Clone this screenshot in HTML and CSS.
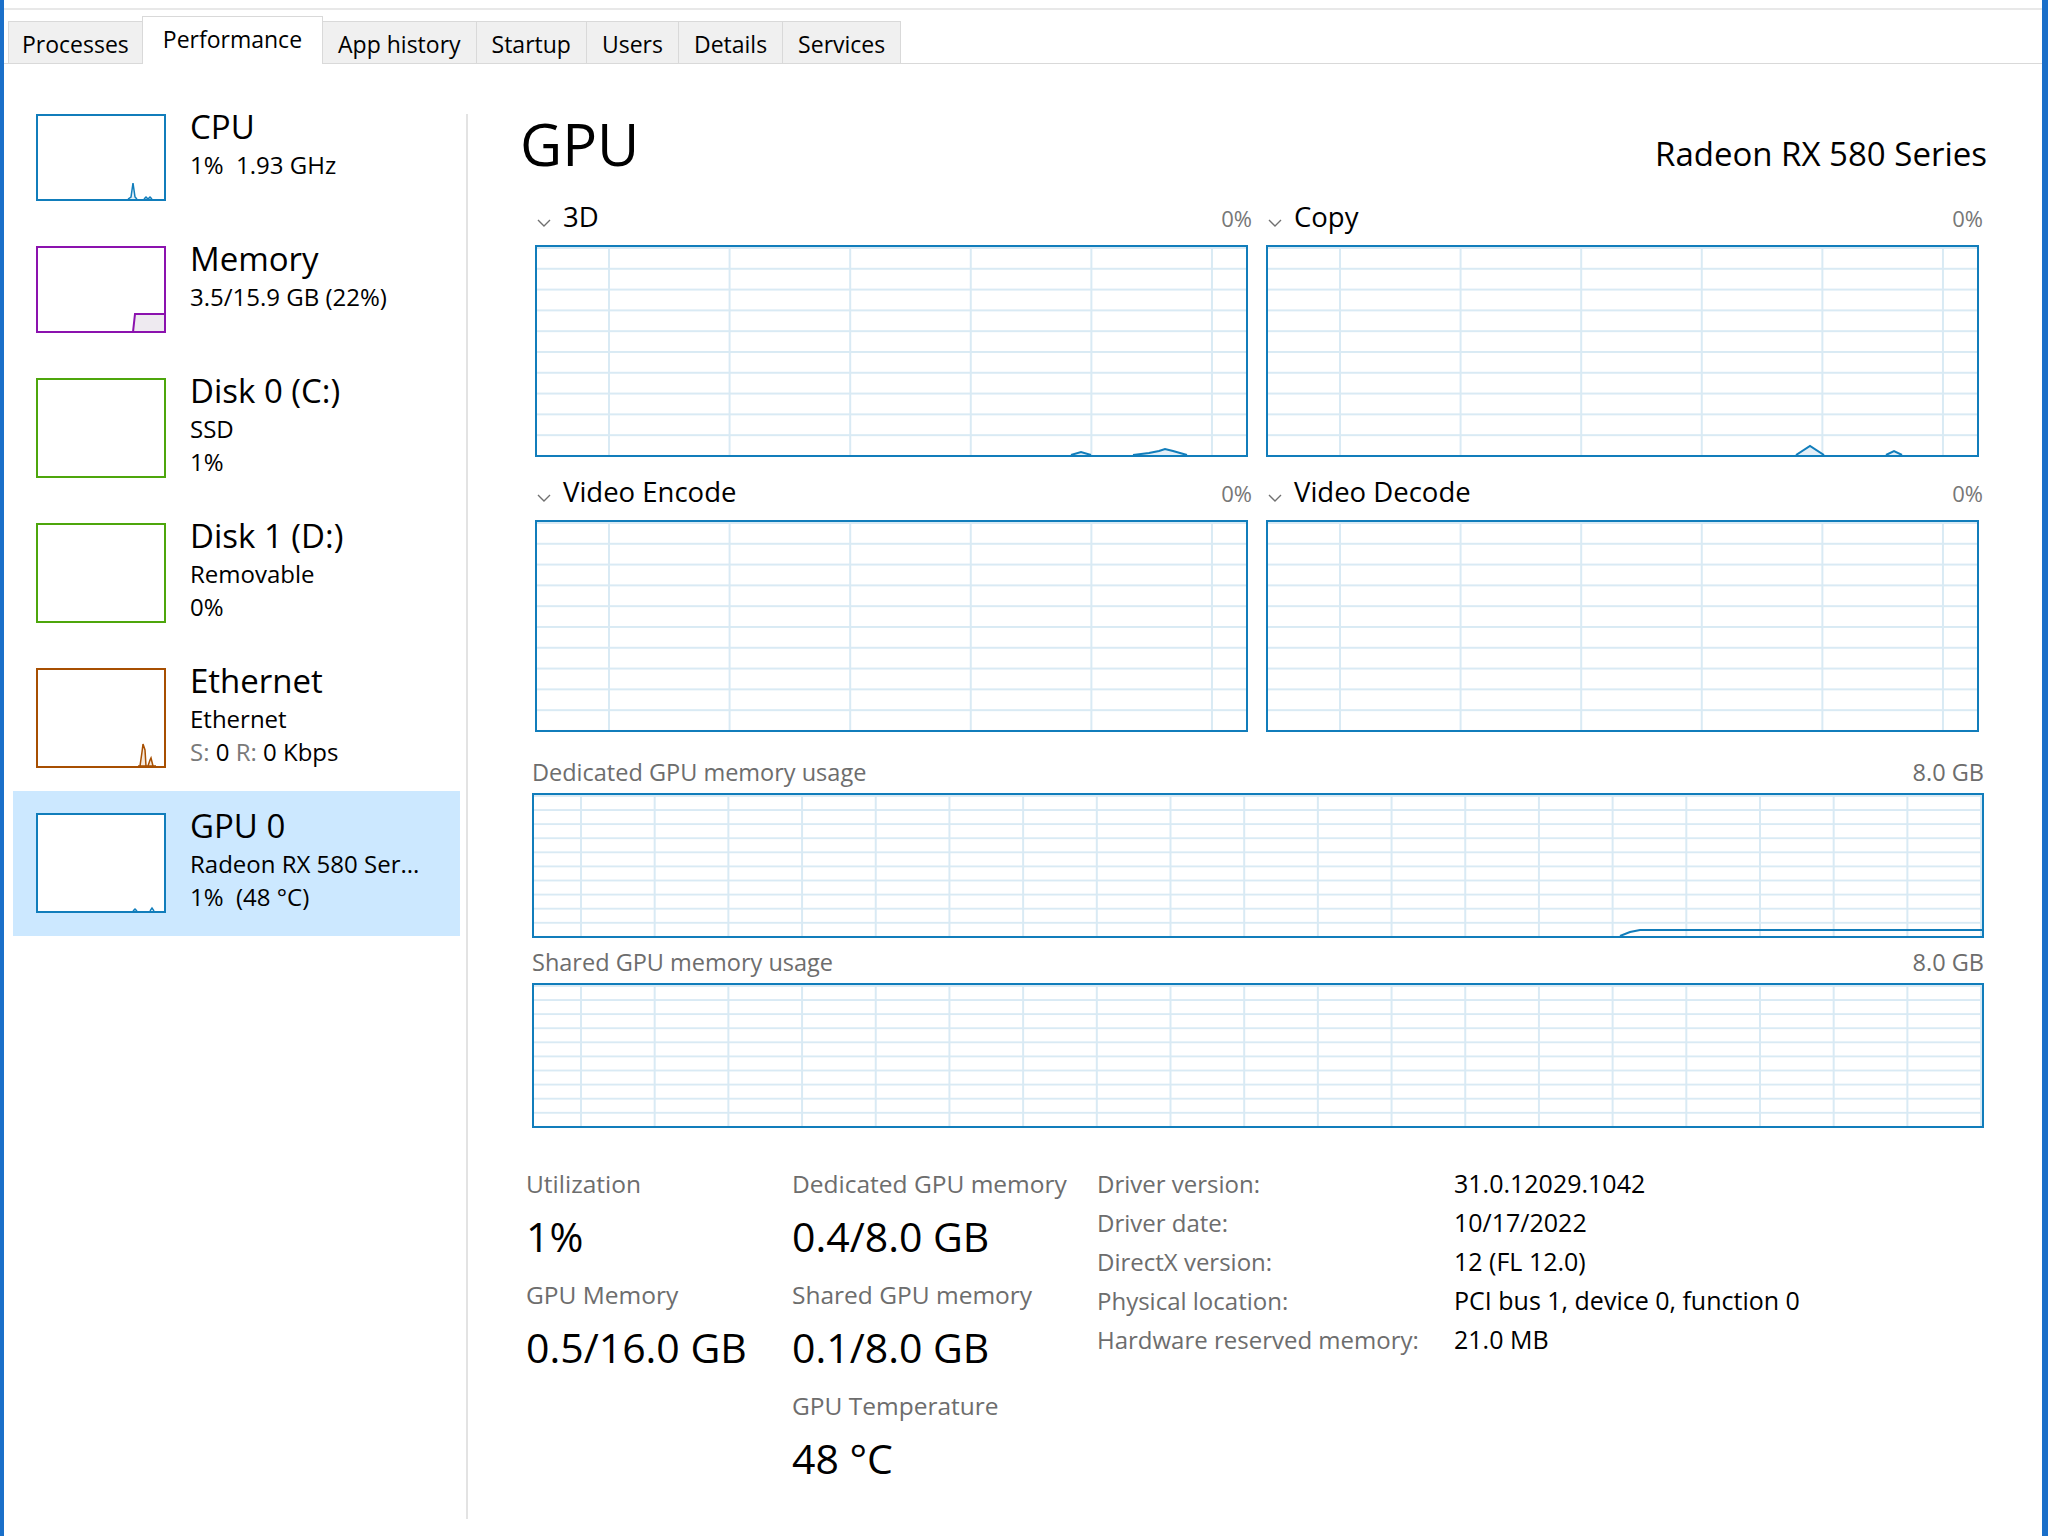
FILE: index.html
```html
<!DOCTYPE html>
<html>
<head>
  <meta charset="utf-8">
  <title>Task Manager - Performance</title>
  <link rel="stylesheet" href="styles.css">
</head>
<body>
  <div class="window">
    <div class="menubar"></div>

    <div class="tabs">
      <div class="tab">Processes</div>
      <div class="tab active">Performance</div>
      <div class="tab">App history</div>
      <div class="tab">Startup</div>
      <div class="tab">Users</div>
      <div class="tab">Details</div>
      <div class="tab">Services</div>
    </div>

    <div class="main">
      <div class="sidebar">
        <div class="item">
          <div class="thumb cpu">
            <svg viewBox="0 0 126 83">
              <polyline points="90,83 93,81 95,67 97,81 99,83" fill="#e3eff8" stroke="#117dbb" stroke-width="1.5"/>
              <polyline points="106,83 108,81 110,83 112,81 114,83" fill="none" stroke="#117dbb" stroke-width="1.5"/>
            </svg>
          </div>
          <div class="item-text">
            <div class="item-title">CPU</div>
            <div class="item-sub">1%&nbsp; 1.93 GHz</div>
          </div>
        </div>

        <div class="item">
          <div class="thumb memory">
            <svg viewBox="0 0 126 83">
              <polygon points="95,84 97,66 127,66 127,84" fill="#eeeaf0" stroke="#8b12ae" stroke-width="2"/>
            </svg>
          </div>
          <div class="item-text">
            <div class="item-title">Memory</div>
            <div class="item-sub">3.5/15.9 GB (22%)</div>
          </div>
        </div>

        <div class="item">
          <div class="thumb disk tall"></div>
          <div class="item-text">
            <div class="item-title">Disk 0 (C:)</div>
            <div class="item-sub">SSD</div>
            <div class="item-sub">1%</div>
          </div>
        </div>

        <div class="item">
          <div class="thumb disk tall"></div>
          <div class="item-text">
            <div class="item-title">Disk 1 (D:)</div>
            <div class="item-sub">Removable</div>
            <div class="item-sub">0%</div>
          </div>
        </div>

        <div class="item">
          <div class="thumb eth tall">
            <svg viewBox="0 0 126 96">
              <polygon points="100,96 102,96 104,82 105,74 107,80 108,96 110,96 112,90 113,88 114,92 115,96 118,96" fill="#f5e8dc" stroke="#a74f01" stroke-width="1.5"/>
            </svg>
          </div>
          <div class="item-text">
            <div class="item-title">Ethernet</div>
            <div class="item-sub">Ethernet</div>
            <div class="item-sub"><span class="dim">S:</span> 0 <span class="dim">R:</span> 0 Kbps</div>
          </div>
        </div>

        <div class="item selected">
          <div class="thumb gpu tall">
            <svg viewBox="0 0 126 96">
              <polyline points="95,96 97,94 99,96" fill="none" stroke="#117dbb" stroke-width="1.5"/>
              <polyline points="112,96 114,93 116,96" fill="none" stroke="#117dbb" stroke-width="1.5"/>
            </svg>
          </div>
          <div class="item-text">
            <div class="item-title">GPU 0</div>
            <div class="item-sub">Radeon RX 580 Ser...</div>
            <div class="item-sub">1%&nbsp; (48 °C)</div>
          </div>
        </div>
      </div>

      <div class="divider"></div>

      <div class="pane">
        <div class="pane-head">
          <div class="pane-title">GPU</div>
          <div class="pane-model">Radeon RX 580 Series</div>
        </div>

        <div class="charts">
          <div class="chart">
            <div class="chart-head">
              <svg class="chevron" viewBox="0 0 14 8"><path d="M1 1 L7 7 L13 1" fill="none" stroke="#707070" stroke-width="1.4"/></svg>
              <span class="chart-name">3D</span>
              <span class="chart-pct">0%</span>
            </div>
            <div class="graph">
              <svg class="plot" viewBox="0 0 709 208" preserveAspectRatio="none">
                <polyline points="534,208 544,205 554,208" fill="#e3eff8" stroke="#117dbb" stroke-width="2" vector-effect="non-scaling-stroke"/>
                <polyline points="596,208 612,206 622,204 628,202 636,204 650,208" fill="#e3eff8" stroke="#117dbb" stroke-width="2" vector-effect="non-scaling-stroke"/>
              </svg>
            </div>
          </div>

          <div class="chart">
            <div class="chart-head">
              <svg class="chevron" viewBox="0 0 14 8"><path d="M1 1 L7 7 L13 1" fill="none" stroke="#707070" stroke-width="1.4"/></svg>
              <span class="chart-name">Copy</span>
              <span class="chart-pct">0%</span>
            </div>
            <div class="graph">
              <svg class="plot" viewBox="0 0 709 208" preserveAspectRatio="none">
                <polyline points="528,208 542,199 556,208" fill="#e3eff8" stroke="#117dbb" stroke-width="2" vector-effect="non-scaling-stroke"/>
                <polyline points="618,208 626,204 634,208" fill="#e3eff8" stroke="#117dbb" stroke-width="2" vector-effect="non-scaling-stroke"/>
              </svg>
            </div>
          </div>

          <div class="chart">
            <div class="chart-head">
              <svg class="chevron" viewBox="0 0 14 8"><path d="M1 1 L7 7 L13 1" fill="none" stroke="#707070" stroke-width="1.4"/></svg>
              <span class="chart-name">Video Encode</span>
              <span class="chart-pct">0%</span>
            </div>
            <div class="graph"></div>
          </div>

          <div class="chart">
            <div class="chart-head">
              <svg class="chevron" viewBox="0 0 14 8"><path d="M1 1 L7 7 L13 1" fill="none" stroke="#707070" stroke-width="1.4"/></svg>
              <span class="chart-name">Video Decode</span>
              <span class="chart-pct">0%</span>
            </div>
            <div class="graph"></div>
          </div>
        </div>

        <div class="mem-section">
          <div class="mem-head"><span>Dedicated GPU memory usage</span><span>8.0 GB</span></div>
          <div class="mem-graph">
            <svg class="plot" viewBox="0 0 1448 141" preserveAspectRatio="none">
              <polyline points="1086,141 1096,137 1106,135 1448,135" fill="none" stroke="#117dbb" stroke-width="2" vector-effect="non-scaling-stroke"/>
            </svg>
          </div>
          <div class="mem-head second"><span>Shared GPU memory usage</span><span>8.0 GB</span></div>
          <div class="mem-graph"></div>
        </div>

        <div class="stats">
          <div class="stat-col first">
            <div class="stat">
              <div class="stat-label">Utilization</div>
              <div class="stat-value">1%</div>
            </div>
            <div class="stat">
              <div class="stat-label">GPU Memory</div>
              <div class="stat-value">0.5/16.0 GB</div>
            </div>
          </div>
          <div class="stat-col second">
            <div class="stat">
              <div class="stat-label">Dedicated GPU memory</div>
              <div class="stat-value">0.4/8.0 GB</div>
            </div>
            <div class="stat">
              <div class="stat-label">Shared GPU memory</div>
              <div class="stat-value">0.1/8.0 GB</div>
            </div>
            <div class="stat">
              <div class="stat-label">GPU Temperature</div>
              <div class="stat-value">48 °C</div>
            </div>
          </div>
          <div class="info">
            <div class="info-label">Driver version:</div>
            <div class="info-value">31.0.12029.1042</div>
            <div class="info-label">Driver date:</div>
            <div class="info-value">10/17/2022</div>
            <div class="info-label">DirectX version:</div>
            <div class="info-value">12 (FL 12.0)</div>
            <div class="info-label">Physical location:</div>
            <div class="info-value">PCI bus 1, device 0, function 0</div>
            <div class="info-label">Hardware reserved memory:</div>
            <div class="info-value">21.0 MB</div>
          </div>
        </div>
      </div>
    </div>
  </div>
</body>
</html>
```
FILE: styles.css
```css
body {
  margin: 0;
  font-family: "Open Sans", "Noto Sans", sans-serif;
  color: #000;
  background: #fff;
}
.window {
  height: 1536px;
  box-sizing: border-box;
  border-left: 4px solid #1a6fc9;
  border-right: 6px solid #1a6fc9;
  display: flex;
  flex-direction: column;
  overflow: hidden;
}

/* strip left of the menu bar */
.menubar {
  height: 8px;
  border-bottom: 2px solid #e8e8e8;
}

/* tabs */
.tabs {
  display: flex;
  align-items: flex-end;
  height: 53px;
  padding-left: 4px;
  border-bottom: 1px solid #d9d9d9;
}
.tab {
  font-size: 23px;
  line-height: 36px;
  padding: 4px 15px 1px;
  background: #f0f0f0;
  border: 1px solid #d9d9d9;
  border-bottom: none;
  margin-right: -1px;
}
.tab:first-child {
  padding: 4px 13px 1px;
}
.tab.active {
  background: #fff;
  padding: 4px 20px 7px;
  margin-bottom: -1px;
}

.main {
  flex: 1;
  display: flex;
  min-height: 0;
}

/* left list */
.sidebar {
  width: 447px;
  padding: 28px 6px 0 9px;
}
.item {
  display: flex;
  align-items: flex-start;
  padding: 22px 0 23px 23px;
}
.item.selected {
  background: #cce8ff;
}
.thumb {
  flex: none;
  width: 130px;
  height: 87px;
  box-sizing: border-box;
  border: 2px solid #117dbb;
  background: #fff;
}
.thumb.tall {
  height: 100px;
}
.thumb svg {
  display: block;
  width: 100%;
  height: 100%;
}
.thumb.memory {
  border-color: #8b12ae;
}
.thumb.disk {
  border-color: #4da60c;
}
.thumb.eth {
  border-color: #a74f01;
}
.item-text {
  margin: -8px 0 -20px 24px;
  white-space: nowrap;
}
.item-title {
  font-size: 33px;
  line-height: 42px;
}
.item-sub {
  font-size: 24px;
  line-height: 33px;
}
.dim {
  color: #7a7a7a;
}

.divider {
  width: 2px;
  background: #e3e3e3;
  margin: 50px 0 17px;
}

/* right pane */
.pane {
  flex: 1;
  min-width: 0;
  padding: 45px 55px 0 58px;
}
.pane-head {
  display: flex;
  justify-content: space-between;
  align-items: baseline;
  margin-left: -6px;
}
.pane-title {
  font-size: 58px;
  line-height: 70px;
}
.pane-model {
  font-size: 33px;
}

.charts {
  display: grid;
  grid-template-columns: 1fr 1fr;
  gap: 18px;
  margin: 21px 8px 0 9px;
}
.chart-head {
  display: flex;
  align-items: baseline;
  height: 34px;
  margin: 0 -4px 11px 0;
  padding-left: 2px;
}
.chevron {
  width: 14px;
  height: 8px;
  margin-bottom: 7px;
}
.chart-name {
  font-size: 27.5px;
  line-height: 34px;
  margin-left: 12px;
}
.chart-pct {
  margin-left: auto;
  font-size: 22px;
  color: #777;
}
.graph {
  height: 212px;
  box-sizing: border-box;
  border: 2px solid #117dbb;
  background:
    linear-gradient(90deg, #d9eaf4 2px, transparent 2px) 71px 0 / 120.6px 100%,
    linear-gradient(#d9eaf4 2px, transparent 2px) 0 0 / 100% 10%;
}
.plot {
  display: block;
  width: 100%;
  height: 100%;
}

.mem-section {
  margin: 25px 3px 0 6px;
}
.mem-head {
  display: flex;
  justify-content: space-between;
  font-size: 23.5px;
  line-height: 30px;
  color: #6d6d6d;
  margin-bottom: 6px;
}
.mem-head.second {
  margin-top: 9px;
}
.mem-graph {
  height: 145px;
  box-sizing: border-box;
  border: 2px solid #117dbb;
  background:
    linear-gradient(90deg, #d9eaf4 2px, transparent 2px) 46px 0 / 73.7px 100%,
    linear-gradient(#d9eaf4 2px, transparent 2px) 0 0 / 100% 10%;
}

/* numbers at the bottom */
.stats {
  display: flex;
  margin-top: 41px;
}
.stat-col.first {
  width: 266px;
}
.stat-col.second {
  width: 305px;
}
.stat + .stat {
  margin-top: 22px;
}
.stat-label {
  font-size: 24.5px;
  line-height: 30px;
  color: #6d6d6d;
  margin-bottom: 15px;
  white-space: nowrap;
}
.stat-value {
  font-size: 41px;
  line-height: 44px;
  white-space: nowrap;
}
.info {
  display: grid;
  grid-template-columns: 357px auto;
  align-content: start;
  font-size: 24px;
  line-height: 39px;
  margin-top: -5px;
}
.info-label {
  color: #6d6d6d;
}
.info-value {
  font-size: 25px;
}
```
